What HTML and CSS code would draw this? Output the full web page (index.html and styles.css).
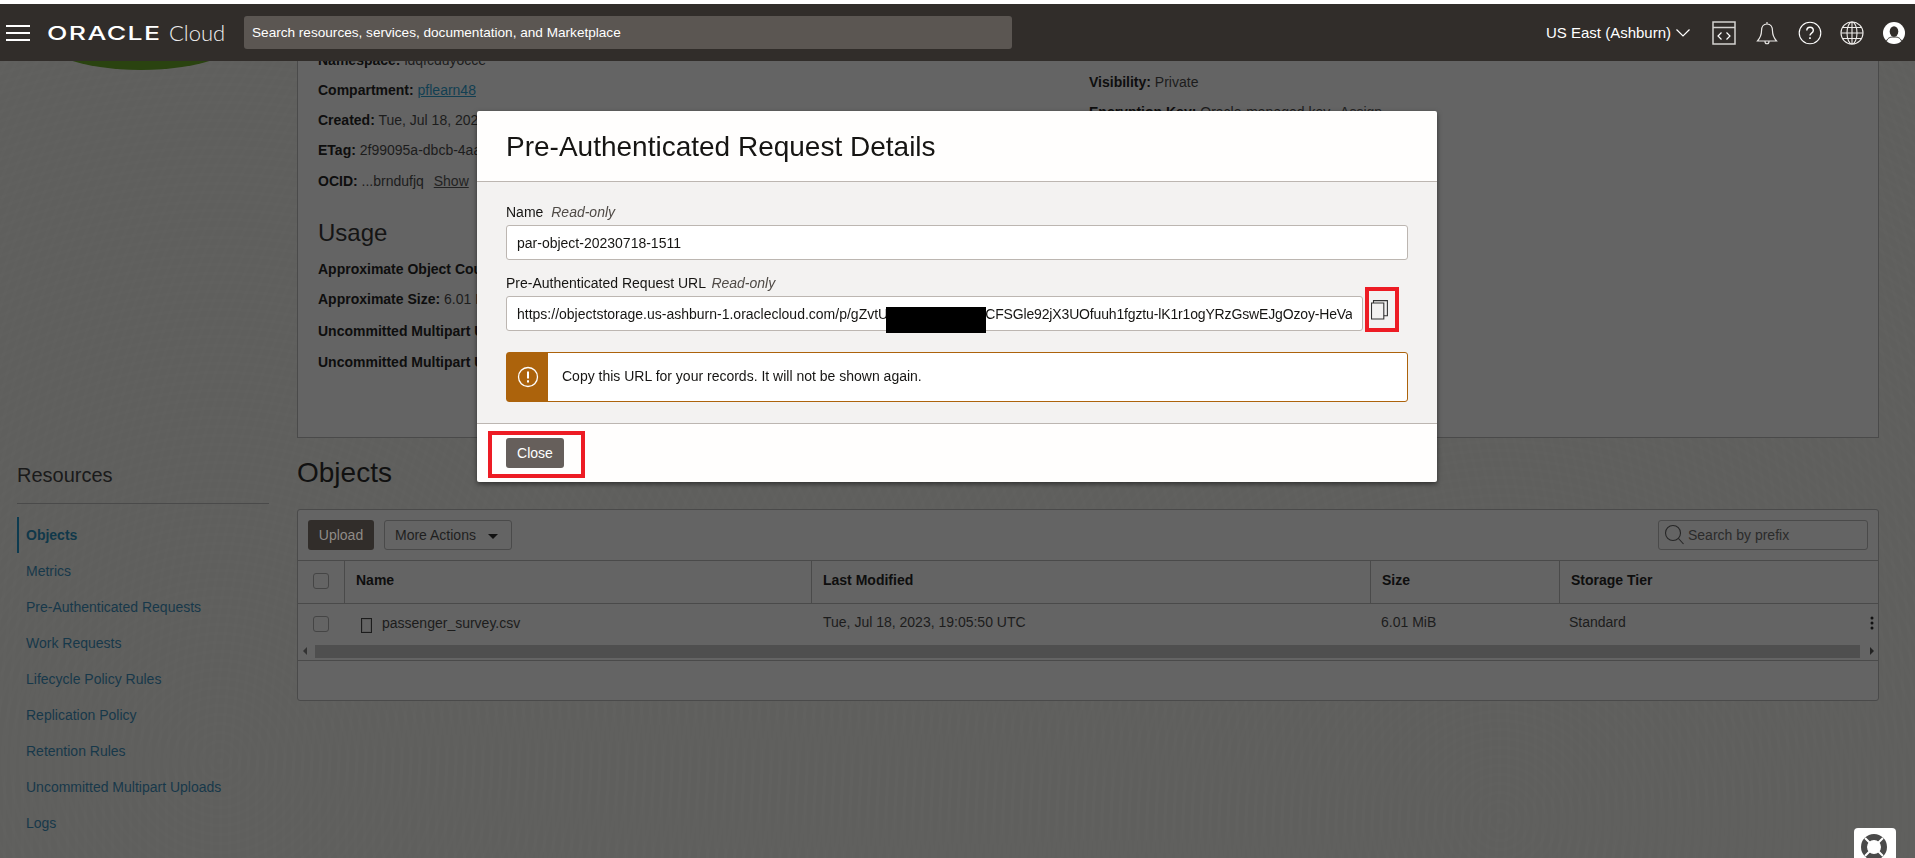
FILE: index.html
```html
<!DOCTYPE html>
<html lang="en">
<head>
  <meta charset="UTF-8">
  <title>Object Details - Oracle Cloud</title>
  <link rel="stylesheet" href="styles.css">
</head>
<body>
  <header class="topbar">
    <svg class="burger" width="24" height="18" viewBox="0 0 24 18">
      <path d="M0 2h24M0 9h24M0 16h24" stroke="#fff" stroke-width="2"/>
    </svg>
    <div class="brand">
      <span class="brand-oracle">ORACLE</span>
      <span class="brand-cloud">Cloud</span>
    </div>
    <div class="global-search">Search resources, services, documentation, and Marketplace</div>
    <div class="topbar-right">
      <span class="region">US East (Ashburn)</span>
      <svg class="chevron" width="14" height="8" viewBox="0 0 14 8">
        <path d="M.5.5 7 7 13.500.5" fill="none" stroke="#fff" stroke-width="1.200"/>
      </svg>
      <svg class="tool tool-code" width="24" height="24" viewBox="0 0 24 24" fill="none" stroke="#d4d2d0">
        <path d="M1 1h22v22H1zM1 6.500h22" stroke-width="1.500"/>
        <path d="M9.500 11.500 6 15l3.500 3.500M14.500 11.500 18 15l-3.500 3.500" stroke="#fff" stroke-width="1.200"/>
      </svg>
      <svg class="tool tool-bell" width="22" height="24" viewBox="0 0 22 24" fill="none" stroke="#e8e6e4" stroke-width="1.200">
        <path d="M11 3c-4 0-5.500 3-5.500 7 0 4-1.500 7-4 10h19c-2.500-3-4-6-4-10 0-4-1.500-7-5.500-7zM11 1v2M9 20.500c0 3 4 3 4 0"/>
      </svg>
      <svg class="tool tool-help" width="24" height="24" viewBox="0 0 24 24" fill="none" stroke="#fff" stroke-width="1.100">
        <circle cx="12" cy="12" r="10.800"/>
        <path d="M8.800 9.500c0-4.300 6.500-4.300 6.500 0 0 2.800-3.300 2.500-3.300 5" stroke-width="1.400"/>
        <path d="M12 16.300v1.800" stroke-width="1.600"/>
      </svg>
      <svg class="tool tool-globe" width="24" height="24" viewBox="0 0 24 24" fill="none" stroke="#eeecea" stroke-width="1.100">
        <circle cx="12" cy="12" r="11"/>
        <ellipse cx="12" cy="12" rx="5" ry="11"/>
        <path d="M12 1v22M1 12h22M2.500 6.500h19M2.500 17.500h19"/>
      </svg>
      <svg class="tool tool-avatar" width="22" height="22" viewBox="0 0 22 22">
        <circle cx="11" cy="11" r="11" fill="#fff"/>
        <ellipse cx="11" cy="9.500" rx="4.300" ry="5.200" fill="#312d2a"/>
        <path d="M3.500 19c1.500-3.500 4-4 7.500-4s6 .5 7.500 4" fill="none" stroke="#312d2a" stroke-width="1"/>
      </svg>
    </div>
  </header>

  <div class="page">
    <aside class="side">
      <svg class="bucket-art" width="297" height="9" viewBox="0 0 297 9">
        <ellipse cx="141" cy="-30" rx="107" ry="39" fill="#2a4310"/>
      </svg>
      <h2 class="side-title">Resources</h2>
      <nav class="side-nav">
        <a class="side-link active">Objects</a>
        <a class="side-link">Metrics</a>
        <a class="side-link">Pre-Authenticated Requests</a>
        <a class="side-link">Work Requests</a>
        <a class="side-link">Lifecycle Policy Rules</a>
        <a class="side-link">Replication Policy</a>
        <a class="side-link">Retention Rules</a>
        <a class="side-link">Uncommitted Multipart Uploads</a>
        <a class="side-link">Logs</a>
      </nav>
    </aside>

    <main class="main">
      <section class="info-card">
        <div class="info-col">
          <div class="info-row"><b>Namespace:</b> idqfcduyocce</div>
          <div class="info-row"><b>Compartment:</b> <a class="link">pflearn48</a></div>
          <div class="info-row"><b>Created:</b> Tue, Jul 18, 2023, 19:02:11 UTC</div>
          <div class="info-row"><b>ETag:</b> 2f99095a-dbcb-4aa1-9f3c-6d2b7a81c1e4</div>
          <div class="info-row ocid"><b>OCID:</b> ...brndufjq <a class="show">Show</a></div>
          <h2 class="usage-title">Usage</h2>
          <div class="info-row"><b>Approximate Object Count:</b> 1 objects</div>
          <div class="info-row"><b>Approximate Size:</b> 6.01 MiB</div>
          <div class="info-row multipart"><b>Uncommitted Multipart Uploads Count:</b> 0</div>
          <div class="info-row"><b>Uncommitted Multipart Uploads Size:</b> 0 Bytes</div>
        </div>
        <div class="info-col info-col-right">
          <div class="info-row"><b>Visibility:</b> Private</div>
          <div class="info-row"><b>Encryption Key:</b> Oracle-managed key <a class="show">Assign</a></div>
        </div>
      </section>

      <h1 class="objects-title">Objects</h1>

      <section class="table-card">
        <div class="toolbar">
          <button class="btn-upload">Upload</button>
          <button class="btn-more">More Actions <i class="caret"></i></button>
          <div class="prefix-search">
            <svg width="22" height="22" viewBox="0 0 22 22" fill="none" stroke="#262626" stroke-width="1.100">
              <circle cx="9" cy="9" r="7.500"/>
              <path d="m14.500 14.500 5 5.500"/>
            </svg>
            <span>Search by prefix</span>
          </div>
        </div>
        <div class="table-row table-head">
          <div class="cell cell-check"><i class="check"></i></div>
          <div class="cell">Name</div>
          <div class="cell">Last Modified</div>
          <div class="cell">Size</div>
          <div class="cell">Storage Tier</div>
        </div>
        <div class="table-row table-body">
          <div class="cell cell-check"><i class="check"></i></div>
          <div class="cell cell-name"><i class="file-icon"></i>passenger_survey.csv</div>
          <div class="cell cell-modified">Tue, Jul 18, 2023, 19:05:50 UTC</div>
          <div class="cell cell-size">6.01 MiB</div>
          <div class="cell">Standard</div>
          <svg class="kebab" width="4" height="14" viewBox="0 0 4 14" fill="#111">
            <circle cx="2" cy="2" r="1.500"/><circle cx="2" cy="7" r="1.500"/><circle cx="2" cy="12" r="1.500"/>
          </svg>
        </div>
        <div class="scrollbar">
          <i class="arrow-left"></i>
          <div class="scroll-thumb"></div>
          <i class="arrow-right"></i>
        </div>
        <div class="table-foot"></div>
      </section>
    </main>
  </div>

  <div class="modal">
    <div class="modal-head">
      <h2 class="modal-title">Pre-Authenticated Request Details</h2>
    </div>
    <div class="modal-body">
      <label class="field-label">Name <em>Read-only</em></label>
      <div class="field">par-object-20230718-1511</div>
      <label class="field-label label-url">Pre-Authenticated Request URL <em>Read-only</em></label>
      <div class="url-row">
        <div class="field field-url">
          <span class="field-text">https://objectstorage.us-ashburn-1.oraclecloud.com/p/gZvtU<i class="redact-gap"></i><span class="url-tail">CFSGle92jX3UOfuuh1fgztu-lK1r1ogYRzGswEJgOzoy-HeVa1bQ</span></span>
        </div>
        <i class="redact"></i>
        <div class="copy-mark">
          <svg width="17" height="20" viewBox="0 0 17 20" fill="none" stroke="#333" stroke-width="1.100">
            <path d="M.5 3h12.300v16H.5z"/>
            <path d="M2.500 3V.6h13.900v15.200h-3.600"/>
          </svg>
        </div>
      </div>
      <div class="notice">
        <div class="notice-icon">
          <svg width="22" height="22" viewBox="0 0 22 22" fill="none" stroke="#fff">
            <circle cx="11" cy="11" r="9.500" stroke-width="1.300"/>
            <path d="M11 5.500v7" stroke-width="2"/>
            <path d="M11 14.300v2.200" stroke-width="2"/>
          </svg>
        </div>
        <div class="notice-text">Copy this URL for your records. It will not be shown again.</div>
      </div>
    </div>
    <div class="modal-foot">
      <button class="btn-close">Close</button>
      <i class="close-mark"></i>
    </div>
  </div>

  <div class="help-tab">
    <svg width="28" height="28" viewBox="0 0 28 28" fill="none">
      <circle cx="14" cy="14" r="10" stroke="#4a4a4a" stroke-width="6"/>
      <path d="m5 5 5.500 5.500M23 5l-5.500 5.500M5 23l5.500-5.500M23 23l-5.500-5.500" stroke="#fff" stroke-width="2"/>
    </svg>
  </div>
</body>
</html>
```

FILE: styles.css
```css
html, body {
  height: 100%;
  overflow: hidden;
}
body {
  margin: 0;
  padding-top: 4px;
  box-sizing: border-box;
  background: #fff;
  font-family: "Liberation Sans", Arial, sans-serif;
  font-size: 14px;
  color: #1a1a1a;
}
h1, h2 {
  margin: 0;
  font-weight: 400;
}
button {
  font-family: inherit;
  font-size: 14px;
  padding: 0;
}

/* top bar */
.topbar {
  position: relative;
  z-index: 2;
  display: flex;
  align-items: center;
  height: 57px;
  background: #312d2a;
  color: #fff;
}
.burger {
  margin: 1px 0 0 6px;
  flex: none;
}
.brand {
  display: flex;
  align-items: center;
  width: 197px;
  margin-left: 17px;
  flex: none;
}
.brand-oracle {
  display: inline-block;
  width: 122px;
  margin-top: 1px;
  font-family: Inter, sans-serif;
  font-size: 19px;
  font-weight: 500;
  letter-spacing: 1px;
  transform: scaleX(1.4);
  transform-origin: left center;
}
.brand-cloud {
  font-family: Lato, sans-serif;
  font-size: 22px;
  font-weight: 300;
  color: #eee;
}
.global-search {
  flex: none;
  box-sizing: border-box;
  width: 768px;
  height: 33px;
  margin-top: -1px;
  padding: 0 8px;
  font-size: 13.600px;
  line-height: 33px;
  background: #5b5652;
  border-radius: 3px;
  color: #fff;
}
.topbar-right {
  display: flex;
  align-items: center;
  margin-left: auto;
  padding-right: 10px;
}
.region {
  font-size: 15px;
  margin-right: 5px;
}
.chevron {
  margin-right: 22px;
}
.tool {
  flex: none;
}
.tool-code { margin-right: 20px; }
.tool-bell { margin-right: 20px; }
.tool-help { margin-right: 18px; }
.tool-globe { margin-right: 19px; }

/* dimmed page behind the dialog */
.page {
  display: flex;
  height: 797px;
  padding-right: 36px;
  background-color: #5f5f5d;
  background-image:
    repeating-radial-gradient(circle at 220px 700px, rgba(255,255,255,.007) 0 3px, transparent 3px 9px),
    repeating-radial-gradient(circle at 1500px 760px, rgba(255,255,255,.006) 0 3px, transparent 3px 9px);
}
.side {
  flex: none;
  width: 297px;
}
.bucket-art {
  display: block;
}
.side-title {
  margin: 393px 28px 0 17px;
  padding-bottom: 16px;
  border-bottom: 1px solid #4a4a4a;
  font-size: 20px;
  line-height: 24px;
  color: #1a1a1a;
}
.side-nav {
  margin: 13px 0 0 17px;
}
.side-link {
  display: block;
  height: 36px;
  padding-left: 9px;
  line-height: 36px;
  color: #17384a;
}
.side-link.active {
  padding-left: 7px;
  border-left: 2px solid #0d3b50;
  font-weight: 700;
  color: #10384a;
}
.main {
  flex: 1;
  min-width: 0;
}

.info-card {
  display: flex;
  box-sizing: border-box;
  height: 394px;
  margin-top: -17px;
  padding-left: 20px;
  background: #646464;
  border: 1px solid #4a4a4a;
}
.info-col {
  width: 771px;
  flex: none;
}
.info-col-right {
  padding-top: 22px;
}
.info-row {
  height: 30px;
  line-height: 30px;
  white-space: nowrap;
  color: #1c1c1c;
}
.info-row b {
  color: #0e0e0e;
}
.ocid {
  margin-top: 1px;
}
.multipart {
  margin-top: 2px;
}
.multipart + .info-row {
  margin-top: 1px;
}
.link {
  color: #123f52;
  text-decoration: underline;
}
.show {
  margin-left: 6px;
  text-decoration: underline;
  color: #222;
}
.usage-title {
  margin: 22px 0 6px;
  font-size: 24px;
  line-height: 30px;
  color: #151515;
}

.objects-title {
  margin: 18px 0 19px;
  font-size: 28px;
  line-height: 34px;
  color: #111;
}
.table-card {
  box-sizing: border-box;
  height: 192px;
  background: #646464;
  border: 1px solid #4a4a4a;
  border-radius: 3px;
}
.toolbar {
  display: flex;
  align-items: center;
  box-sizing: border-box;
  height: 51px;
  padding: 0 10px;
  border-bottom: 1px solid #4a4a4a;
}
.btn-upload {
  width: 66px;
  height: 30px;
  border: 0;
  border-radius: 3px;
  background: #312d2a;
  color: #8f8b87;
}
.btn-more {
  width: 128px;
  height: 30px;
  margin-left: 10px;
  background: none;
  border: 1px solid #4a4a4a;
  border-radius: 3px;
  color: #1f1f1f;
  text-align: left;
  padding-left: 10px;
}
.caret {
  display: inline-block;
  margin-left: 8px;
  border: 5px solid transparent;
  border-top-color: #111;
  border-bottom: 0;
  vertical-align: 1px;
}
.prefix-search {
  display: flex;
  align-items: center;
  gap: 2px;
  box-sizing: border-box;
  width: 210px;
  height: 30px;
  margin-left: auto;
  padding-left: 5px;
  border: 1px solid #4a4a4a;
  border-radius: 3px;
  color: #2b2b2b;
}
.table-row {
  position: relative;
  display: grid;
  grid-template-columns: 46px 467px 559px 189px 1fr;
}
.table-head {
  height: 42px;
  border-bottom: 1px solid #4a4a4a;
  font-weight: 700;
  color: #0e0e0e;
}
.table-head .cell {
  padding-left: 11px;
  line-height: 39px;
  border-left: 1px solid #4a4a4a;
}
.table-head .cell:first-child {
  border-left: 0;
  padding-left: 0;
}
.table-body {
  height: 41px;
  line-height: 37px;
  color: #1c1c1c;
}
.table-body .cell {
  padding-left: 10px;
}
.table-body .cell:first-child {
  padding-left: 0;
}
.table-body .cell-name {
  display: flex;
  align-items: center;
  padding-left: 17px;
  margin-top: -2px;
}
.table-body .cell-modified {
  padding-left: 12px;
}
.table-body .cell-size {
  padding-left: 11px;
}
.cell-check {
  display: flex;
  align-items: center;
  padding-left: 15px !important;
}
.check {
  display: block;
  box-sizing: border-box;
  width: 16px;
  height: 16px;
  border: 1px solid #454545;
  border-radius: 3px;
}
.table-head .check {
  margin-top: -3px;
}
.table-body .check {
  margin-top: -1px;
}
.file-icon {
  box-sizing: border-box;
  width: 11px;
  height: 15px;
  margin: 4px 10px 0 0;
  border: 1px solid #1c1c1c;
  box-shadow: inset 0 0 0 1px #5a5a5a;
}
.kebab {
  position: absolute;
  right: 4px;
  top: 12px;
}
.scrollbar {
  display: flex;
  align-items: center;
  height: 14px;
  margin-top: -1px;
}
.scroll-thumb {
  flex: 1;
  height: 13px;
  margin: 0 10px 0 8px;
  background: #4f4f4f;
}
.arrow-left, .arrow-right {
  border: 4px solid transparent;
}
.arrow-left {
  margin-left: 5px;
  border-left: 0;
  border-right-color: #333;
}
.arrow-right {
  margin-right: 4px;
  border-right: 0;
  border-left-color: #222;
}
.table-foot {
  margin-top: 2px;
  border-top: 1px solid #4a4a4a;
}

/* dialog */
.modal {
  position: fixed;
  z-index: 3;
  left: 477px;
  top: 111px;
  display: flex;
  flex-direction: column;
  box-sizing: border-box;
  width: 960px;
  height: 371px;
  background: #fffefd;
  border-radius: 2px;
  box-shadow: 0 2px 5px rgba(0,0,0,.5);
}
.modal-head {
  flex: none;
  box-sizing: border-box;
  height: 71px;
  padding: 19px 29px 0;
  border-bottom: 1px solid #bcb6b1;
}
.modal-title {
  font-size: 28px;
  line-height: 34px;
  color: #161513;
}
.modal-body {
  flex: 1;
  padding: 20px 29px 0;
  background: #f3f2f1;
}
.field-label {
  display: block;
  height: 20px;
  line-height: 20px;
  margin-bottom: 3px;
  color: #161513;
}
.field-label em {
  margin-left: 4px;
  color: #4f4a46;
}
.label-url em {
  margin-left: 2px;
}
.field {
  box-sizing: border-box;
  height: 35px;
  margin-bottom: 13px;
  padding: 0 10px;
  line-height: 35px;
  background: #fff;
  border: 1px solid #bcb6b1;
  border-radius: 3px;
  color: #161513;
}
.url-row {
  position: relative;
}
.field-url {
  width: 857px;
  overflow: hidden;
  padding-right: 0;
}
.field-text {
  display: block;
  width: 835px;
  overflow: hidden;
  white-space: nowrap;
}
.url-tail {
  letter-spacing: -.15px;
}
.redact-gap {
  display: inline-block;
  width: 97px;
}
.redact {
  position: absolute;
  left: 380px;
  top: 11px;
  width: 100px;
  height: 26px;
  background: #000;
}
.copy-mark {
  position: absolute;
  left: 859px;
  top: -9px;
  display: flex;
  box-sizing: border-box;
  width: 34px;
  height: 45px;
  padding: 9px 0 0 2px;
  border: 4px solid #ed1c24;
}
.notice {
  display: flex;
  box-sizing: border-box;
  height: 50px;
  margin-top: 21px;
  background: #fff;
  border: 1px solid #ac630c;
  border-radius: 3px;
}
.notice-icon {
  display: flex;
  align-items: center;
  justify-content: center;
  width: 41px;
  background: #ac630c;
}
.notice-text {
  padding-left: 14px;
  line-height: 46px;
  color: #161513;
}
.modal-foot {
  position: relative;
  flex: none;
  height: 59px;
  box-sizing: border-box;
  padding: 14px 29px 0;
  border-top: 1px solid #bcb6b1;
}
.btn-close {
  display: block;
  width: 58px;
  height: 30px;
  border: 0;
  border-radius: 3px;
  background: #665f5b;
  color: #fff;
}
.close-mark {
  position: absolute;
  left: 11px;
  top: 7px;
  box-sizing: border-box;
  width: 97px;
  height: 47px;
  border: 4px solid #ed1c24;
}

.help-tab {
  position: fixed;
  z-index: 2;
  right: 19px;
  top: 828px;
  display: flex;
  justify-content: center;
  box-sizing: border-box;
  width: 42px;
  height: 40px;
  padding: 5px 3px 0 0;
  background: #fff;
  border-radius: 4px;
}
```
